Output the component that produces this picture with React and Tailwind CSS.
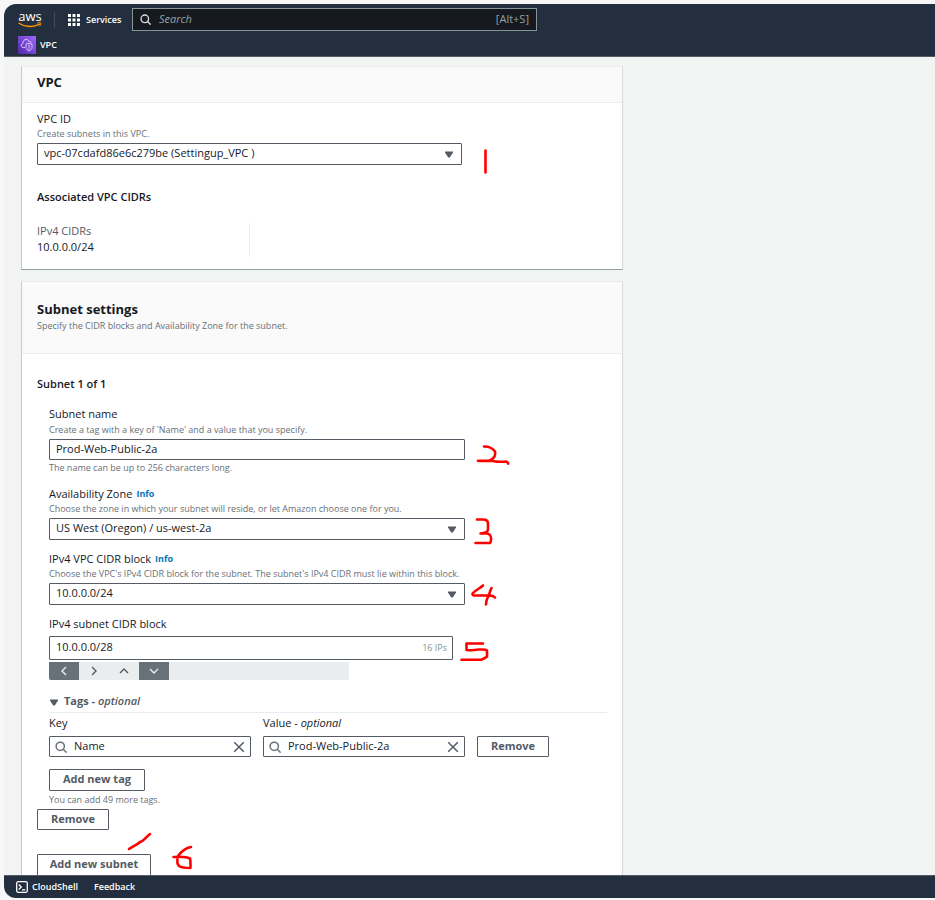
import React from "react";

const FIELD =
  "flex items-center rounded-[1px] border border-[#545b64] bg-white text-[11px] leading-4 text-[#16191f]";
const BUTTON =
  "flex items-center justify-center rounded-[1px] border border-[#545b64] bg-white pb-[2px] text-[11px] leading-4 font-bold text-[#545b64]";

function SearchIcon({ className }) {
  return (
    <svg className={className} viewBox="0 0 16 16" fill="none" stroke="currentColor" strokeWidth="2">
      <circle cx="7" cy="7" r="5.500" />
      <path d="M15.500 15.500l-4.500-4.500" />
    </svg>
  );
}

function Caret({ className = "" }) {
  return (
    <svg className={`h-[7px] w-2 shrink-0 ${className}`} viewBox="0 0 8 7">
      <path d="M0 0.5h8v1L4.800 6.500H3.200L0 1.500z" fill="#545b64" />
    </svg>
  );
}

function AwsLogo() {
  return (
    <a href="#" aria-label="AWS home" className="flex w-6 flex-col items-center text-white">
      <span className="text-[13px] leading-[10px] font-medium">aws</span>
      <svg className="mt-[1px] h-[6px] w-6" viewBox="0 0 24 6" fill="none" stroke="#f90" strokeLinecap="round">
        <path d="M1 1.2C7 5.4 15.500 5.600 21.500 2.200" strokeWidth="1.400" />
        <path d="M19.500 1c1.500-.6 3.200-.6 3.400-.1.2.6-.3 2-1.200 3.100" strokeWidth="1" />
      </svg>
    </a>
  );
}

function VpcIcon() {
  return (
    <svg className="h-[18px] w-[18px]" viewBox="0 0 18 18" fill="none">
      <defs>
        <linearGradient id="vpc" x1="0" y1="1" x2="1" y2="0">
          <stop offset="0" stopColor="#4d27a8" />
          <stop offset="1" stopColor="#a166ff" />
        </linearGradient>
      </defs>
      <rect width="18" height="18" fill="url(#vpc)" />
      <g stroke="#e6d9ff" strokeWidth="0.900" strokeLinejoin="round">
        <path d="M7 11.500H5.200C3.500 11.300 3 9.900 3.300 8.900c.3-.9.900-1.300 1.600-1.400C4.800 5 6.300 3.500 8.100 3.500c1.500 0 2.500.8 3 2 .9-.5 2 .1 2.100 1.200" />
        <path d="M8 8.200l3-1 3 1v3.200c0 1.700-1.500 2.900-3 3.500-1.500-.6-3-1.800-3-3.500z" />
        <path d="M11 8.500v5" />
      </g>
    </svg>
  );
}

function Label({ htmlFor, info, children }) {
  return (
    <div className="flex items-center gap-1 text-[11px] leading-4 text-[#16191f]">
      <label htmlFor={htmlFor}>{children}</label>
      {info && (
        <a href="#" className="text-[9px] font-bold text-[#0073bb]">
          Info
        </a>
      )}
    </div>
  );
}

function Hint({ tall, children }) {
  return <p className={`text-[9px] text-[#687078] ${tall ? "leading-4" : "leading-[14px]"}`}>{children}</p>;
}

function SelectField({ id, value, className }) {
  return (
    <div className={`relative mt-[2px] flex items-center ${className}`}>
      <select id={id} className={`${FIELD} h-[22px] w-full appearance-none px-[6px] pb-[2px]`}>
        <option>{value}</option>
      </select>
      <Caret className="pointer-events-none absolute right-[9px]" />
    </div>
  );
}

function TagField({ id, label, value }) {
  return (
    <div className="w-[202px]">
      <label htmlFor={id} className="block text-[11px] leading-4">
        {label}
      </label>
      <div className={`${FIELD} mt-[5px] h-[21px] px-[5px]`}>
        <SearchIcon className="h-3 w-3 shrink-0 text-[#687078]" />
        <input id={id} defaultValue={value} className="ml-[7px] min-w-0 flex-1 pb-[2px] outline-none" />
        <button type="button" aria-label="Clear">
          <svg className="h-3 w-3 text-[#545b64]" viewBox="0 0 12 12" stroke="currentColor" strokeWidth="1.500">
            <path d="M1.200 1.200l9.600 9.600M10.800 1.200l-9.600 9.600" />
          </svg>
        </button>
      </div>
    </div>
  );
}

function Stepper() {
  const steps = [
    ["Previous block", "M7 1L3 5l4 4", true],
    ["Next block", "M3 1l4 4-4 4", false],
    ["Larger block", "M1 7l4-4 4 4", false],
    ["Smaller block", "M1 3l4 4 4-4", true],
  ];
  return (
    <div className="mt-[2px] flex h-[18px] w-[300px] overflow-hidden rounded-b-[2px] bg-[#eaeded]">
      {steps.map(([name, d, dark]) => (
        <button
          key={name}
          type="button"
          aria-label={name}
          className={`flex w-[30px] items-center justify-center ${dark ? "bg-[#687078] text-[#eaeded]" : "text-[#545b64]"}`}
        >
          <svg className="h-[10px] w-[10px]" viewBox="0 0 10 10" fill="none" stroke="currentColor" strokeWidth="1.400">
            <path d={d} />
          </svg>
        </button>
      ))}
    </div>
  );
}

function Card({ header, children }) {
  return (
    <section className="border border-t-[#eaeded] border-r-[#d5dbdb] border-b-[#95a0a0] border-l-[#c6cccc] bg-white">
      <header className="border-b border-[#eaeded] bg-[#fafafa] px-[15px]">{header}</header>
      <div className="px-[15px]">{children}</div>
    </section>
  );
}

/* Red pen marks numbering the steps, laid over the form. */
function PenMarks() {
  return (
    <svg
      aria-hidden="true"
      className="pointer-events-none absolute top-0 left-0 h-[809px] w-[602px]"
      viewBox="21 66 602 809"
      fill="none"
      stroke="#f00"
      strokeWidth="2.600"
      strokeLinecap="round"
      strokeLinejoin="round"
    >
      <path d="M485.500 150.500v22" />
      <path d="M484 446.500c5 0 9 2 11 5 1 4-1 7-5 9-4 1-8 .5-12 .3 5 .2 10-.3 15 .2 4 1 8 1 13 .5 1 .2 2 1 2.200 2.200" />
      <path d="M477 519.500h6c3 0 5 1 5 4v6c0 2-3 3.500-7.500 4h7c3 1 4 4 3.500 6.500 0 1.500-.5 2.500-1 3H475.500" />
      <path d="M483 585.500c-3 3-7 4-10.500 8-.5 1.500 1 2 3 2h14c2 0 4 .3 5.500 2M491.500 588c-2 4-2 7-4 10-1 2-1.500 4-1.500 6.500" />
      <path d="M483 643.500H466.500v6.500c5 1 8-.5 12-.5s7-.5 8.500 1v6c-2 2-4 2.500-6 3.200H461.500" />
      <path d="M129 849c4-3 8-4 11-7 4-1 6-5 10-8" />
      <path d="M191 847c-6 1-10 5-13 9-1 4-1 8 1 10 3 2 7 2 11.500 2-.2-4 .5-7-.5-9.500-4-2-10-2-16.500-1.500" />
    </svg>
  );
}

export default function App() {
  return (
    <div className="h-screen bg-[#f7f7f7] pt-1 pb-[2px] pl-1 font-['Open_Sans','Noto_Sans',sans-serif] text-[#16191f]">
      <div className="flex h-full flex-col overflow-hidden rounded-l-xl bg-[#f2f3f3]">
        <header className="h-[53px] shrink-0 border-b border-[#545b64] bg-[#232f3e] text-white">
          <div className="flex h-[31px] items-center pl-[14px]">
            <AwsLogo />
            <span className="ml-3 h-4 w-px bg-[#414d5c]" />
            <button type="button" className="ml-[13px] flex items-center gap-[6px]">
              <svg className="h-3 w-3" viewBox="0 0 12 12" fill="currentColor">
                {[0, 4.5, 9].map((y) => [0, 4.5, 9].map((x) => <rect key={`${x}-${y}`} x={x} y={y} width="3" height="3" />))}
              </svg>
              <span className="w-[34px] text-left text-[9px] font-semibold">Services</span>
            </button>
            <div className="ml-3 flex h-[23px] w-[405px] items-center border border-[#879596] bg-[#16191f] px-[7px] text-[11px] text-[#95a5a6]">
              <SearchIcon className="h-[11px] w-[11px] shrink-0 text-[#d5dbdb]" />
              <input
                type="search"
                aria-label="Search"
                placeholder="Search"
                className="ml-2 min-w-0 flex-1 outline-none placeholder:text-[#95a5a6] placeholder:italic"
              />
              <span>[Alt+S]</span>
            </div>
          </div>
          <a href="#" className="flex items-center gap-1 pt-[1px] pl-[14px] text-[9px] font-semibold">
            <VpcIcon />
            VPC
          </a>
        </header>

        <main className="min-h-0 flex-1 overflow-y-auto [scrollbar-width:none]">
          <div className="relative mt-[9px] ml-[17px] flex w-[602px] flex-col gap-[11px]">
            <Card header={<h2 className="pt-[5px] pb-[10px] text-[13px] leading-5 font-bold">VPC</h2>}>
              <div className="pt-2">
                <Label htmlFor="vpc-id">VPC ID</Label>
                <Hint>Create subnets in this VPC.</Hint>
                <SelectField id="vpc-id" value="vpc-07cdafd86e6c279be (Settingup_VPC )" className="w-[425px]" />
              </div>
              <h3 className="mt-6 text-[11px] leading-4 font-semibold">Associated VPC CIDRs</h3>
              <dl className="mt-[18px] mb-3 h-[34px] w-[213px] border-r border-[#eaeded] text-[11px] leading-4">
                <dt className="text-[#545b64]">IPv4 CIDRs</dt>
                <dd>10.0.0.0/24</dd>
              </dl>
            </Card>

            <Card
              header={
                <div className="pt-[17px] pb-5">
                  <h2 className="text-[13px] leading-5 font-bold">Subnet settings</h2>
                  <Hint>Specify the CIDR blocks and Availability Zone for the subnet.</Hint>
                </div>
              }
            >
              <h3 className="pt-[22px] text-[11px] leading-4 font-semibold">Subnet 1 of 1</h3>
              <div className="mt-[14px] pl-3">
                <Label htmlFor="subnet-name">Subnet name</Label>
                <Hint tall>Create a tag with a key of 'Name' and a value that you specify.</Hint>
                <input id="subnet-name" defaultValue="Prod-Web-Public-2a" className={`${FIELD} mt-px h-[21px] w-[416px] px-[6px] pb-[2px]`} />
                <Hint tall>The name can be up to 256 characters long.</Hint>

                <div className="mt-[10px]">
                  <Label htmlFor="zone" info>
                    Availability Zone
                  </Label>
                  <Hint>Choose the zone in which your subnet will reside, or let Amazon choose one for you.</Hint>
                  <SelectField id="zone" value="US West (Oregon) / us-west-2a" className="w-[416px]" />
                </div>

                <div className="mt-[11px]">
                  <Label htmlFor="vpc-cidr" info>
                    IPv4 VPC CIDR block
                  </Label>
                  <Hint>Choose the VPC's IPv4 CIDR block for the subnet. The subnet's IPv4 CIDR must lie within this block.</Hint>
                  <SelectField id="vpc-cidr" value="10.0.0.0/24" className="w-[416px]" />
                </div>

                <div className="mt-[11px]">
                  <Label htmlFor="subnet-cidr">IPv4 subnet CIDR block</Label>
                  <div className={`${FIELD} mt-1 h-6 w-[404px] pr-[5px] pl-[6px]`}>
                    <input id="subnet-cidr" defaultValue="10.0.0.0/28" className="min-w-0 flex-1 pb-[2px] outline-none" />
                    <span className="text-[9px] text-[#879596]">16 IPs</span>
                  </div>
                  <Stepper />
                </div>

                <button
                  type="button"
                  aria-expanded="true"
                  className="mt-[13px] flex h-5 w-full items-start gap-[6px] border-b border-[#eaeded] pl-[1px] text-[11px] leading-4 font-bold text-[#545b64]"
                >
                  <Caret className="mt-[6px]" />
                  <span>
                    Tags - <i className="font-semibold">optional</i>
                  </span>
                </button>

                <div className="mt-[2px] flex items-end gap-3">
                  <TagField id="tag-key" label="Key" value="Name" />
                  <TagField
                    id="tag-value"
                    label={
                      <>
                        Value - <i>optional</i>
                      </>
                    }
                    value="Prod-Web-Public-2a"
                  />
                  <button type="button" className={`${BUTTON} h-[21px] w-[72px]`}>
                    Remove
                  </button>
                </div>

                <button type="button" className={`${BUTTON} mt-3 h-[22px] w-24`}>
                  Add new tag
                </button>
                <div className="mt-[2px]">
                  <Hint>You can add 49 more tags.</Hint>
                </div>
              </div>

              <button type="button" className={`${BUTTON} mt-[2px] h-[21px] w-[72px]`}>
                Remove
              </button>
              <button type="button" className={`${BUTTON} mt-6 mb-5 h-[22px] w-[114px]`}>
                Add new subnet
              </button>
            </Card>
            <PenMarks />
          </div>
        </main>

        <footer className="flex h-[23px] shrink-0 items-center border-t border-[#545b64] bg-[#232f3e] pl-3 text-[9px] font-semibold text-white">
          <button type="button" className="flex items-center gap-1">
            <svg className="h-3 w-3" viewBox="0 0 12 12" fill="none" stroke="currentColor" strokeWidth="1.300">
              <rect x="0.700" y="0.700" width="10.600" height="10.600" rx="1.500" />
              <path d="M2.800 3.500L5.300 6 2.800 8.500M6 8.800h3.200" />
            </svg>
            CloudShell
          </button>
          <a href="#" className="ml-4">
            Feedback
          </a>
        </footer>
      </div>
    </div>
  );
}
